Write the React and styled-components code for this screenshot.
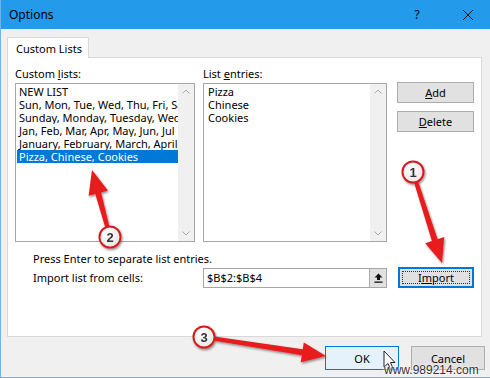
import styled, { createGlobalStyle } from "styled-components";

const GlobalStyle = createGlobalStyle`
	html, body {
		margin: 0;
		padding: 0;
		background: #f0f0f0;
	}
	body {
		font-family: "Noto Sans", "Open Sans", sans-serif;
		font-size: 11px;
		color: #000;
	}
`;

const Window = styled.div`
	position: relative;
	width: 490px;
	height: 378px;
	box-sizing: border-box;
	background: #f0f0f0;
	border-left: 1px solid #6fb5ec;
	border-bottom: 1px solid #6fb5ec;
	overflow: hidden;
`;

const TitleBar = styled.div`
	height: 29px;
	background: #239aea;
	display: flex;
	align-items: center;
	padding-left: 8px;
	font-size: 12px;

	.title {
		flex: 1;
	}

	.help {
		width: 20px;
		text-align: center;
		font-size: 12px;
		margin-right: 36px;
	}

	.close {
		width: 10px;
		height: 10px;
		margin-right: 17px;
	}
`;

const TabRow = styled.div`
	display: flex;
	padding-left: 6px;
	margin-top: 8px;
	position: relative;
	z-index: 1;
`;

const Tab = styled.div`
	width: 82px;
	height: 21px;
	box-sizing: border-box;
	background: #fff;
	border: 1px solid #d9d9d9;
	border-bottom: none;
	padding-left: 8px;
	display: flex;
	align-items: center;
	font-size: 11px;
	margin-bottom: -1px;
`;

const Panel = styled.div`
	margin-left: 6px;
	width: 475px;
	height: 280px;
	box-sizing: border-box;
	background: #fff;
	border: 1px solid #d9d9d9;
	padding: 9px 0 0 7px;
`;

const TopArea = styled.div`
	display: grid;
	grid-template-columns: 180px 184px 77px;
	column-gap: 8px;
`;

const Label = styled.div`
	height: 14px;
	line-height: 14px;
	margin-bottom: 2px;
	white-space: nowrap;
`;

const ListBox = styled.div`
	height: 159px;
	box-sizing: border-box;
	border: 1px solid #a6a6a6;
	display: flex;
	background: #fff;
`;

const Items = styled.div`
	flex: 1;
	min-width: 0;
	padding-top: 1px;
	padding-left: ${(p) => p.$indent || 0}px;
	overflow: hidden;
`;

const Item = styled.div`
	height: 13px;
	line-height: 13px;
	margin-left: ${(p) => (p.$selected ? "1px" : "0")};
	padding-left: ${(p) => (p.$selected ? "2px" : "3px")};
	white-space: nowrap;
	overflow: hidden;
	background: ${(p) => (p.$selected ? "#0078d7" : "transparent")};
	color: ${(p) => (p.$selected ? "#fff" : "#000")};
`;

const ScrollBar = styled.div`
	width: 16px;
	background: #f0f0f0;
	display: flex;
	flex-direction: column;
	justify-content: space-between;
	align-items: center;
	padding: 5px 0;
	box-sizing: border-box;

	svg {
		width: 8px;
		height: 5px;
	}
`;

const ButtonColumn = styled.div`
	display: flex;
	flex-direction: column;
	gap: 8px;
	padding-top: 15px;
	margin-left: 2px;
`;

const Button = styled.button`
	width: ${(p) => p.$w || 77}px;
	height: ${(p) => p.$h || 21}px;
	box-sizing: border-box;
	font-family: inherit;
	font-size: 11px;
	color: #000;
	padding: 0;
	background: ${(p) => (p.$hover ? "#e5f1fb" : "#e1e1e1")};
	border: ${(p) => (p.$focus ? "2px solid #0078d7" : p.$hover ? "1px solid #0078d7" : "1px solid #adadad")};
	display: flex;
	align-items: center;
	justify-content: center;

	.focus {
		width: calc(100% - 4px);
		height: calc(100% - 4px);
		border: 1px dotted #333;
		box-sizing: border-box;
		display: flex;
		align-items: center;
		justify-content: center;
	}
`;

const Hint = styled.div`
	margin-top: 10px;
	padding-left: 18px;
	line-height: 14px;
	height: 14px;
`;

const ImportRow = styled.div`
	display: flex;
	align-items: center;
	margin-top: 1px;
	padding-left: 18px;

	.label {
		width: 170px;
	}
`;

const RangeInput = styled.div`
	width: 184px;
	height: 20px;
	box-sizing: border-box;
	border: 1px solid #a6a6a6;
	display: flex;
	align-items: center;
	margin-right: 11px;

	.value {
		flex: 1;
		padding-left: 3px;
	}
`;

const PickButton = styled.div`
	width: 17px;
	height: 18px;
	box-sizing: border-box;
	background: #e1e1e1;
	border-left: 1px solid #adadad;
	display: flex;
	align-items: center;
	justify-content: center;
`;

const Footer = styled.div`
	display: flex;
	gap: 12px;
	margin-top: 9px;
	padding-left: 324px;
`;

const Overlay = styled.svg`
	position: absolute;
	left: 0;
	top: 0;
	pointer-events: none;
`;

const Cursor = styled.svg`
	position: absolute;
	left: 382px;
	top: 350px;
`;

const Watermark = styled.div`
	position: absolute;
	left: 383px;
	top: 363px;
	font-family: "Liberation Sans", Arial, sans-serif;
	font-size: 12px;
	color: #333;
	text-shadow: 0 0 2px #fff, 0 0 2px #fff;
`;

const Up = () => (
	<svg viewBox="0 0 8 5">
		<path d="M0.5 4.5 L4 1 L7.5 4.5" fill="none" stroke="#a8a8a8" />
	</svg>
);

const Down = () => (
	<svg viewBox="0 0 8 5">
		<path d="M0.5 0.5 L4 4 L7.5 0.5" fill="none" stroke="#a8a8a8" />
	</svg>
);

const customLists = [
	"NEW LIST",
	"Sun, Mon, Tue, Wed, Thu, Fri, Sat",
	"Sunday, Monday, Tuesday, Wednesday",
	"Jan, Feb, Mar, Apr, May, Jun, Jul",
	"January, February, March, April",
	"Pizza, Chinese, Cookies",
];

const entries = ["Pizza", "Chinese", "Cookies"];

const arrow = (x1, y1, x2, y2, shaft = 6, headW = 20, headL = 24) => {
	const len = Math.hypot(x2 - x1, y2 - y1);
	const ux = (x2 - x1) / len;
	const uy = (y2 - y1) / len;
	const px = -uy;
	const py = ux;
	const bx = x2 - ux * headL;
	const by = y2 - uy * headL;
	const s = shaft / 2;
	const h = headW / 2;
	const pts = [
		[x1 + px * s * 0.7, y1 + py * s * 0.7],
		[bx + px * s, by + py * s],
		[bx + px * h, by + py * h],
		[x2, y2],
		[bx - px * h, by - py * h],
		[bx - px * s, by - py * s],
		[x1 - px * s * 0.7, y1 - py * s * 0.7],
	];
	return pts.map((p) => p.map((v) => v.toFixed(1)).join(",")).join(" ");
};

const callouts = [
	{ n: 1, cx: 412, cy: 172, tip: [441, 263] },
	{ n: 2, cx: 109, cy: 237, tip: [91, 170] },
	{ n: 3, cx: 203, cy: 337, tip: [325, 356] },
];

const App = () => {
	return (
		<Window>
			<GlobalStyle />
			<TitleBar>
				<span className="title">Options</span>
				<span className="help">?</span>
				<svg className="close" viewBox="0 0 10 10">
					<path d="M0 0 L10 10 M10 0 L0 10" stroke="#111" strokeWidth="1" />
				</svg>
			</TitleBar>
			<TabRow>
				<Tab>Custom Lists</Tab>
			</TabRow>
			<Panel>
				<TopArea>
					<div>
						<Label>
							Custom <u>l</u>ists:
						</Label>
						<ListBox>
							<Items>
								{customLists.map((t, i) => (
									<Item key={t} $selected={i === customLists.length - 1}>
										{t}
									</Item>
								))}
							</Items>
							<ScrollBar>
								<Up />
								<Down />
							</ScrollBar>
						</ListBox>
					</div>
					<div>
						<Label>
							List <u>e</u>ntries:
						</Label>
						<ListBox>
							<Items $indent={1}>
								{entries.map((t) => (
									<Item key={t}>{t}</Item>
								))}
							</Items>
							<ScrollBar>
								<Up />
								<Down />
							</ScrollBar>
						</ListBox>
					</div>
					<ButtonColumn>
						<Button>
							<span>
								<u>A</u>dd
							</span>
						</Button>
						<Button>
							<span>
								<u>D</u>elete
							</span>
						</Button>
					</ButtonColumn>
				</TopArea>
				<Hint>Press Enter to separate list entries.</Hint>
				<ImportRow>
					<span className="label">Import list from cells:</span>
					<RangeInput>
						<span className="value">$B$2:$B$4</span>
						<PickButton>
							<svg width="9" height="10" viewBox="0 0 9 10">
								<path d="M4.5 0.5 L8.5 4.5 L6 4.5 L6 7 L3 7 L3 4.5 L0.5 4.5 Z" fill="#111" />
								<rect x="0.5" y="8.5" width="8" height="1.3" fill="#111" />
							</svg>
						</PickButton>
					</RangeInput>
					<Button $w={76} $focus>
						<span className="focus">
							<span>
								I<u>m</u>port
							</span>
						</span>
					</Button>
				</ImportRow>
			</Panel>
			<Footer>
				<Button $w={74} $h={24} $hover>
					OK
				</Button>
				<Button $w={74} $h={24}>
					Cancel
				</Button>
			</Footer>

			<Overlay width="490" height="378" viewBox="0 0 490 378">
				<defs>
					<filter id="sh" x="-20%" y="-20%" width="140%" height="140%">
						<feDropShadow dx="1" dy="1.5" stdDeviation="1.2" floodColor="#000" floodOpacity="0.45" />
					</filter>
					<radialGradient id="disc" cx="40%" cy="35%" r="70%">
						<stop offset="0%" stopColor="#ffffff" />
						<stop offset="100%" stopColor="#e6e6e6" />
					</radialGradient>
				</defs>
				{callouts.map((c) => {
					const len = Math.hypot(c.tip[0] - c.cx, c.tip[1] - c.cy);
					const sx = c.cx + ((c.tip[0] - c.cx) / len) * 10;
					const sy = c.cy + ((c.tip[1] - c.cy) / len) * 10;
					return (
						<g key={c.n} filter="url(#sh)">
							<polygon points={arrow(sx, sy, c.tip[0], c.tip[1])} fill="#e81c1c" />
							<circle cx={c.cx} cy={c.cy} r="10.5" fill="url(#disc)" stroke="#d41f1f" strokeWidth="2" />
							<text
								x={c.cx}
								y={c.cy + 4.5}
								textAnchor="middle"
								fontFamily="Liberation Sans, Arial, sans-serif"
								fontWeight="bold"
								fontSize="13"
								fill="#333"
							>
								{c.n}
							</text>
						</g>
					);
				})}
			</Overlay>
			<Cursor width="13" height="22" viewBox="0 0 13 22">
				<path d="M1 1 L1 17 L5 13.5 L8 20.5 L10.5 19.5 L7.5 12.5 L12 12.5 Z" fill="#fff" stroke="#222" strokeWidth="1" />
			</Cursor>
			<Watermark>www.989214.com</Watermark>
		</Window>
	);
};

export default App;
